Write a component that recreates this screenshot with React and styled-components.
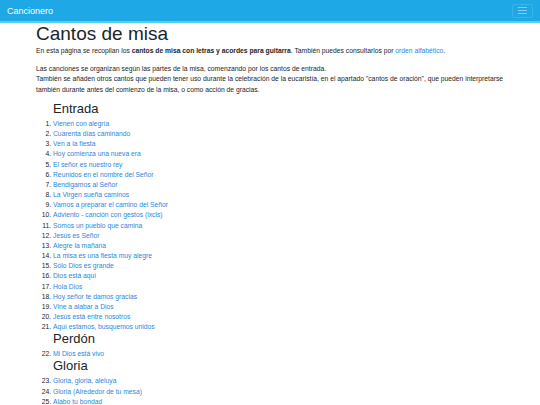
import React from 'react';
import styled, { createGlobalStyle } from 'styled-components';

const GlobalStyle = createGlobalStyle`
  body {
    margin: 0;
    background: #ffffff;
    font-family: "Liberation Sans", Arial, sans-serif;
    color: #212529;
  }
  a {
    color: #2b87e0;
    text-decoration: none;
  }
`;

const NavBar = styled.nav`
  height: 21px;
  background: #1fa8e6;
  border-bottom: 2px solid #5ccdf0;
  display: flex;
  align-items: center;
  justify-content: space-between;
  padding: 0 7px;
`;

const Brand = styled.span`
  color: #ffffff;
  font-size: 9px;
`;

const Toggler = styled.button`
  width: 21px;
  height: 14px;
  border: 1px solid rgba(255, 255, 255, 0.12);
  border-radius: 2px;
  background: transparent;
  display: flex;
  flex-direction: column;
  align-items: center;
  justify-content: center;
  gap: 2px;
  padding: 0;

  span {
    display: block;
    width: 9px;
    height: 1px;
    background: rgba(255, 255, 255, 0.45);
  }
`;

const Container = styled.main`
  width: 472px;
  margin: 0 32px 0 36px;
`;

const Title = styled.h1`
  font-size: 19px;
  font-weight: 400;
  margin: 0 0 1px;
  line-height: 22px;
`;

const Text = styled.p`
  font-size: 6.75px;
  line-height: 10.5px;
  margin: 0 0 7px;
  color: #212529;
`;

const Section = styled.h2`
  font-size: 13px;
  font-weight: 400;
  margin: 0 0 3px 17px;
  line-height: 14px;
`;

const List = styled.ol`
  margin: 0;
  padding-left: 17px;
  font-size: 6.75px;
  line-height: 10.15px;
`;

const sections = [
  {
    title: 'Entrada',
    songs: [
      'Vienen con alegría',
      'Cuarenta días caminando',
      'Ven a la fiesta',
      'Hoy comienza una nueva era',
      'El señor es nuestro rey',
      'Reunidos en el nombre del Señor',
      'Bendigamos al Señor',
      'La Virgen sueña caminos',
      'Vamos a preparar el camino del Señor',
      'Adviento - canción con gestos (lxcls)',
      'Somos un pueblo que camina',
      'Jesús es Señor',
      'Alegre la mañana',
      'La misa es una fiesta muy alegre',
      'Sólo Dios es grande',
      'Dios está aquí',
      'Hola Dios',
      'Hoy señor te damos gracias',
      'Vine a alabar a Dios',
      'Jesús está entre nosotros',
      'Aquí estamos, busquemos unidos',
    ],
  },
  { title: 'Perdón', songs: ['Mi Dios está vivo'] },
  {
    title: 'Gloria',
    songs: ['Gloria, gloria, aleluya', 'Gloria (Alrededor de tu mesa)', 'Alabo tu bondad'],
  },
];

export default function App() {
  let n = 0;
  return (
    <>
      <GlobalStyle />
      <NavBar>
        <Brand>Cancionero</Brand>
        <Toggler aria-label="menu">
          <span />
          <span />
          <span />
        </Toggler>
      </NavBar>
      <Container>
        <Title>Cantos de misa</Title>
        <Text>
          En esta página se recopilan los <b>cantos de misa con letras y acordes para guitarra</b>. También
          puedes consultarlos por <a href="#">orden alfabético</a>.
        </Text>
        <Text>
          Las canciones se organizan según las partes de la misa, comenzando por los cantos de entrada.
          <br />
          También se añaden otros cantos que pueden tener uso durante la celebración de la eucaristía, en el
          apartado "cantos de oración", que pueden interpretarse también durante antes del comienzo de la misa,
          o como acción de gracias.
        </Text>
        {sections.map((s) => {
          const start = n + 1;
          n += s.songs.length;
          return (
            <React.Fragment key={s.title}>
              <Section>{s.title}</Section>
              <List start={start}>
                {s.songs.map((song) => (
                  <li key={song}>
                    <a href="#">{song}</a>
                  </li>
                ))}
              </List>
            </React.Fragment>
          );
        })}
      </Container>
    </>
  );
}
